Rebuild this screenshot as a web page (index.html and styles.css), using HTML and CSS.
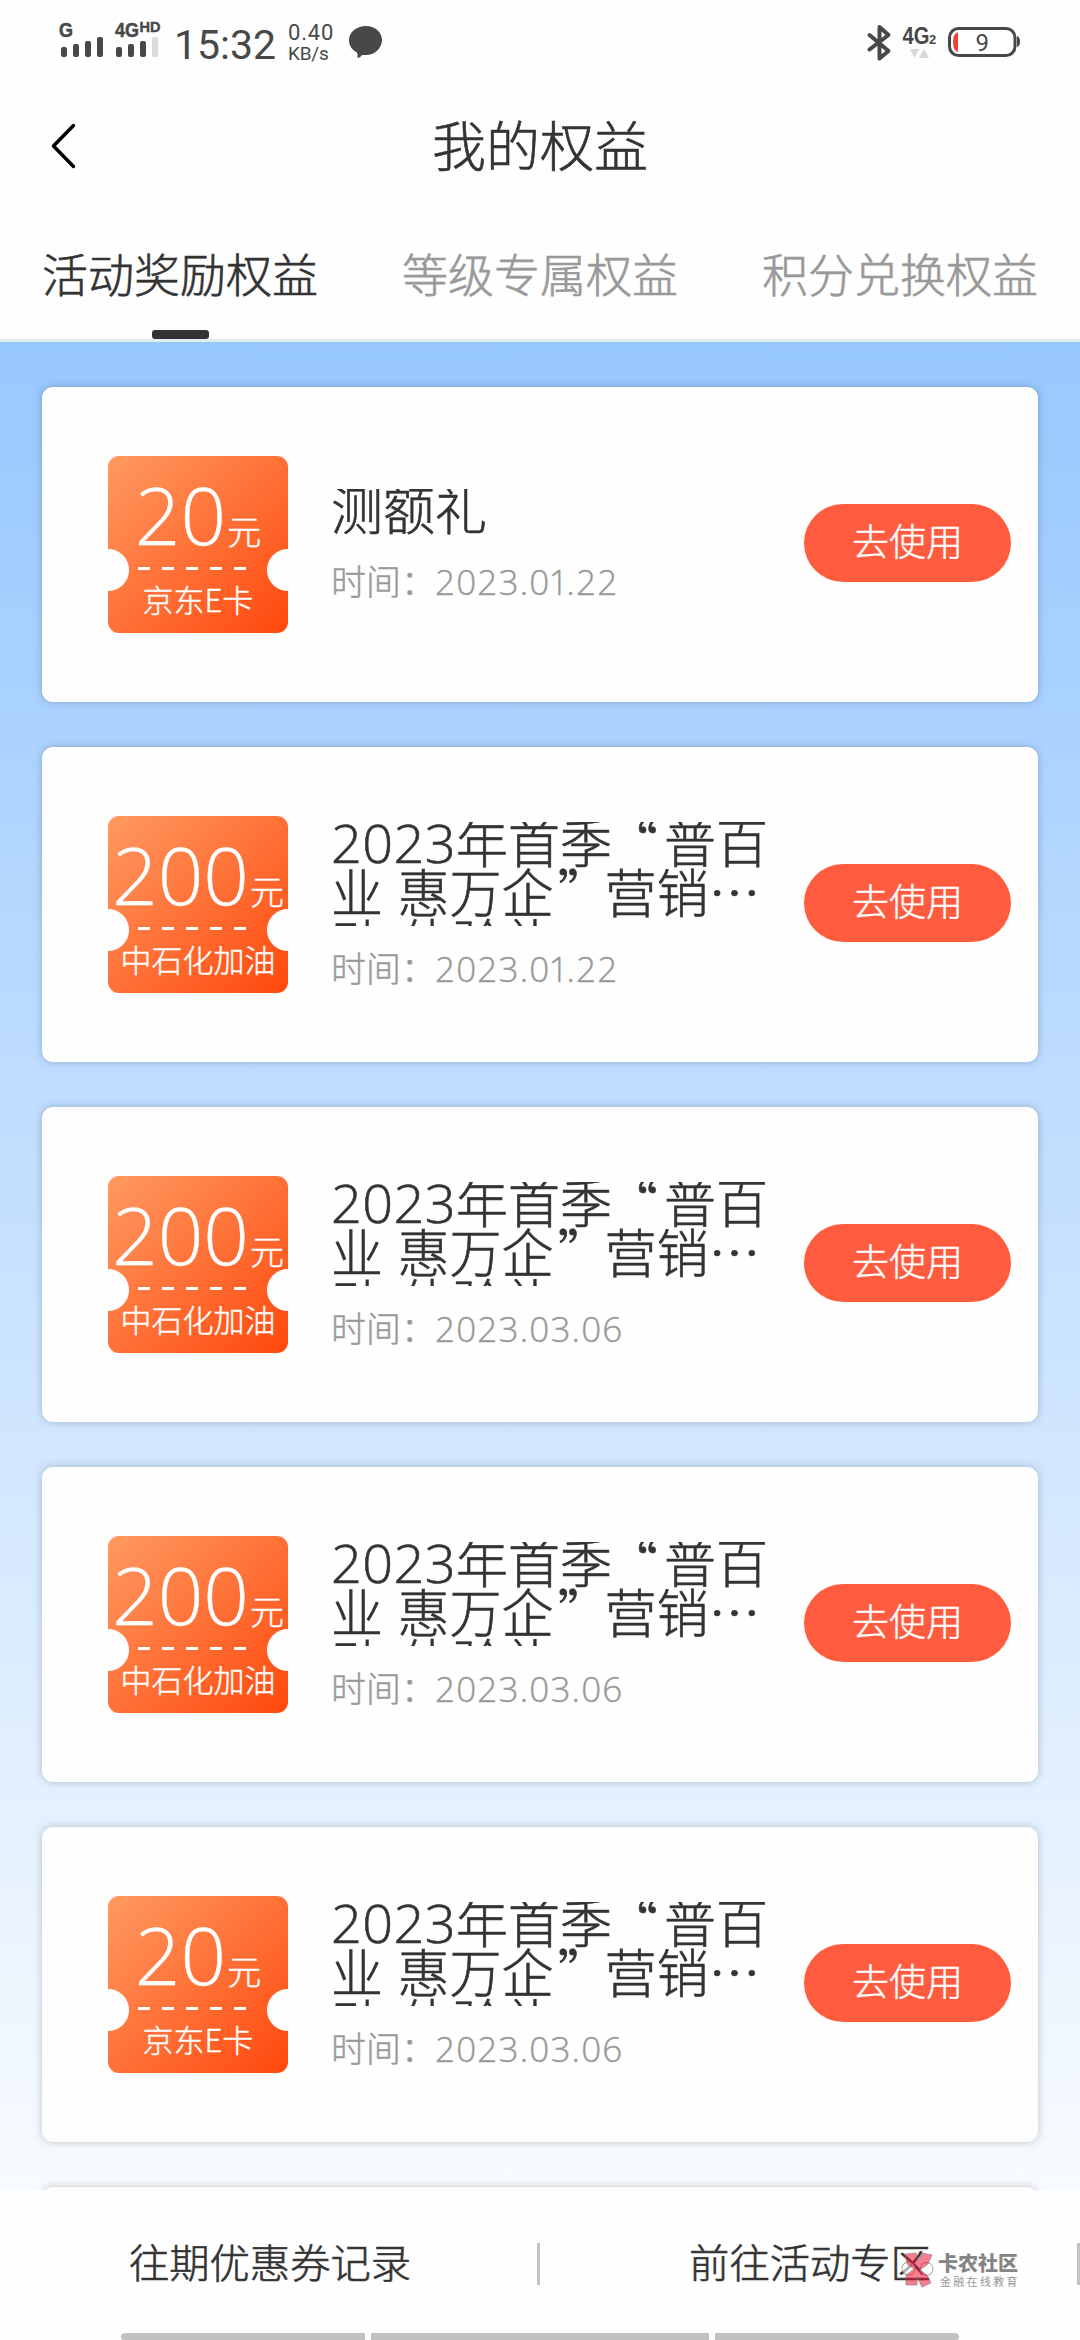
FILE: index.html
```html
<!DOCTYPE html>
<html lang="zh-CN">
<head>
<meta charset="utf-8">
<title>我的权益</title>
<link rel="stylesheet" href="styles.css">
</head>
<body>
<div class="screen">
  <header class="status">
    <svg class="signals" width="104" height="44" viewBox="58 18 104 44">
      <text class="net" x="59" y="37" textLength="14" lengthAdjust="spacingAndGlyphs">G</text>
      <g fill="#484848"><rect x="61" y="47" width="6" height="10" rx="2"/><rect x="73" y="44" width="6" height="13" rx="2"/><rect x="85" y="41" width="6" height="16" rx="2"/><rect x="97" y="37" width="6" height="20" rx="2"/>
      <rect x="116" y="47" width="6" height="10" rx="2"/><rect x="128" y="44" width="6" height="13" rx="2"/><rect x="140" y="41" width="6" height="16" rx="2"/></g>
      <rect x="152" y="37" width="6" height="20" rx="2" fill="#dcdcdc"/>
      <text class="net" x="115" y="37" textLength="24" lengthAdjust="spacingAndGlyphs">4G</text>
      <text class="hd" x="139.500" y="32" textLength="21" lengthAdjust="spacingAndGlyphs">HD</text>
    </svg>
    <span class="clock">15:32</span>
    <span class="speed"><span>0.40</span><span class="unit">KB/s</span></span>
    <svg class="bubble" width="34" height="34" viewBox="0 0 34 34"><path fill="#484848" d="M17 0C26.500 0 33 6.500 33 14S26.500 29 17 29C15 29 14 29 13 29C12 31 9.500 32 8.500 32C8.500 30 8.700 28.500 8 26.500C3 24 0 19.500 0 14C0 6.500 7 0 17 0Z"/></svg>
    <svg class="right-icons" width="154" height="44" viewBox="866 20 154 44">
      <path d="M869.500 35L888.500 51L879.500 58.500V27L888.500 35L869.500 49.500" fill="none" stroke="#484848" stroke-width="4" stroke-linejoin="round" stroke-linecap="round"/>
      <text class="net4" x="902.500" y="43.500" textLength="27" lengthAdjust="spacingAndGlyphs">4G</text>
      <text class="two" x="929" y="43.500">2</text>
      <path d="M910 49H919L914.500 58ZM919 58H929L924 49Z" fill="#d8d8d8"/>
      <rect x="949.500" y="28.500" width="65.500" height="27" rx="9" fill="#fff" stroke="#484848" stroke-width="3"/>
      <path d="M958 32V52Q953 50 953 42T958 32Z" fill="#f0402f"/>
      <path d="M1017 36Q1020 37 1020 41.500T1017 47Z" fill="#484848"/>
      <text class="pct" x="975.500" y="50.500">9</text>
    </svg>
  </header>

  <nav class="navbar">
    <svg class="back" width="26" height="48" viewBox="0 0 26 48"><path d="M23.500 3.500L3.500 24L23.500 44.500" fill="none" stroke="#000" stroke-width="3.500" stroke-linecap="round" stroke-linejoin="round"/></svg>
    <h1>我的权益</h1>
  </nav>

  <div class="tabs">
    <div class="tab active">活动奖励权益</div>
    <div class="tab">等级专属权益</div>
    <div class="tab">积分兑换权益</div>
  </div>

  <main class="list">
    <article class="card">
      <div class="coupon"><div class="amount">20<small>元</small></div><i class="dashes"></i><div class="kind">京东E卡</div></div>
      <div class="info"><div class="name"><p>测额礼</p></div><div class="time">时间：<b>2023.0<span class="one">1</span>.22</b></div></div>
      <button class="use">去使用</button>
    </article>
    <article class="card">
      <div class="coupon"><div class="amount">200<small>元</small></div><i class="dashes"></i><div class="kind">中石化加油</div></div>
      <div class="info"><div class="name"><p><b>2023</b>年首季<span class="quote">“</span>普百<br>业 惠万企<span class="endquote">”</span>营销…<br>动-体验礼</p></div><div class="time">时间：<b>2023.0<span class="one">1</span>.22</b></div></div>
      <button class="use">去使用</button>
    </article>
    <article class="card">
      <div class="coupon"><div class="amount">200<small>元</small></div><i class="dashes"></i><div class="kind">中石化加油</div></div>
      <div class="info"><div class="name"><p><b>2023</b>年首季<span class="quote">“</span>普百<br>业 惠万企<span class="endquote">”</span>营销…<br>动-体验礼</p></div><div class="time">时间：<b>2023.03.06</b></div></div>
      <button class="use">去使用</button>
    </article>
    <article class="card">
      <div class="coupon"><div class="amount">200<small>元</small></div><i class="dashes"></i><div class="kind">中石化加油</div></div>
      <div class="info"><div class="name"><p><b>2023</b>年首季<span class="quote">“</span>普百<br>业 惠万企<span class="endquote">”</span>营销…<br>动-体验礼</p></div><div class="time">时间：<b>2023.03.06</b></div></div>
      <button class="use">去使用</button>
    </article>
    <article class="card">
      <div class="coupon"><div class="amount">20<small>元</small></div><i class="dashes"></i><div class="kind">京东E卡</div></div>
      <div class="info"><div class="name"><p><b>2023</b>年首季<span class="quote">“</span>普百<br>业 惠万企<span class="endquote">”</span>营销…<br>动-体验礼</p></div><div class="time">时间：<b>2023.03.06</b></div></div>
      <button class="use">去使用</button>
    </article>
    <article class="card"></article>
  </main>

  <footer class="bottom">
    <a class="link">往期优惠券记录</a>
    <a class="link">前往活动专区</a>
    <div class="gesture"><i class="side left"></i><i class="mid"></i><i class="side right"></i></div>
    <div class="mark">
      <svg width="35" height="36" viewBox="0 0 35 36">
        <circle cx="8.500" cy="16.500" r="6.500" fill="#fff" fill-opacity=".6" stroke="#888" stroke-width=".8"/>
        <circle cx="26.500" cy="17" r="6.500" fill="#fff" fill-opacity=".6" stroke="#888" stroke-width=".8"/>
        <path d="M5 2L16 1L18 9L22 1L32 3L28 12L20 18L27 23L31 31L22 35L17 25L17 33L6 33L6 23L14 17L7 12Z" fill="#ee1030" fill-opacity=".54" stroke="#777" stroke-opacity=".7" stroke-width=".8"/>
      </svg>
      <div class="mark-text"><span class="brand">卡农社区</span><span class="slogan">金融在线教育</span></div>
    </div>
  </footer>
</div>
</body>
</html>
```
FILE: styles.css
```css
* { box-sizing: border-box; }
body {
  margin: 0;
  font-family: "Noto Sans CJK SC", sans-serif;
  font-weight: 300;
  color: #333;
  background: #fff;
}
.screen {
  width: 1080px;
  height: 2340px;
  display: flex;
  flex-direction: column;
  overflow: hidden;
  background: #fefefe;
}
.navbar, .tabs, .link, .name { -webkit-text-stroke: .6px currentColor; }
.coupon, .time, .use { -webkit-text-stroke: .4px currentColor; }

/* status bar */
.status {
  height: 84px;
  flex: none;
  display: flex;
  align-items: flex-start;
  padding: 0 60px 0 58px;
  color: #484848;
  font-family: Roboto, sans-serif;
  font-weight: 400;
}
.signals { margin-top: 18px; }
.net { font: 700 21px "Liberation Sans", sans-serif; fill: #484848; stroke: #484848; stroke-width: .5px; }
.hd { font: 700 14px "Liberation Sans", sans-serif; fill: #484848; stroke: #484848; stroke-width: .4px; }
.clock { margin: 21px 0 0 12px; width: 103px; font-size: 41px; line-height: 48px; white-space: nowrap; }
.speed { display: flex; flex-direction: column; margin: 22px 0 0 11px; width: 60px; font-size: 22px; line-height: 22px; letter-spacing: .8px; }
.unit { font-size: 19px; line-height: 20px; letter-spacing: -.2px; }
.bubble { margin: 26px 0 0 1px; }
.right-icons { margin: 20px 0 0 auto; }
.net4 { font: 700 23px "Liberation Sans", sans-serif; fill: #484848; }
.two { font: 700 13px "Liberation Sans", sans-serif; fill: #484848; }
.pct { font: 400 24px Roboto, sans-serif; fill: #484848; }

/* title bar */
.navbar {
  height: 124px;
  flex: none;
  display: grid;
  grid-template-columns: 78px 1fr 78px;
  align-items: center;
}
.back { margin-left: 50px; }
.navbar h1 { margin: 0; font-size: 54px; line-height: 60px; font-weight: 300; text-align: center; padding-bottom: 4px; }

/* tabs */
.tabs {
  height: 134px;
  flex: none;
  display: grid;
  grid-template-columns: repeat(3, 1fr);
  border-bottom: 3px solid #dcefeb;
}
.tab {
  display: flex;
  flex-direction: column;
  align-items: center;
  padding-top: 34px;
  font-size: 46px;
  line-height: 60px;
  color: #999;
}
.active { color: #333; }
.active::after { content: ""; width: 57px; height: 9px; margin-top: 28px; border-radius: 3px; background: #333; }

/* coupon list */
.list {
  height: 1848px;
  flex: none;
  overflow: hidden;
  padding: 45px 42px 0;
  display: flex;
  flex-direction: column;
  gap: 45px;
  background: linear-gradient(#97c8ff, #f8fbff);
}
.card {
  height: 315px;
  flex: none;
  display: flex;
  align-items: center;
  padding: 0 27px 0 66px;
  border-radius: 11px;
  background: #fefefe;
  box-shadow: 0 0 9px rgba(0, 0, 0, .22);
}
.coupon {
  width: 180px;
  height: 177px;
  flex: none;
  display: flex;
  flex-direction: column;
  align-items: center;
  border-radius: 11px;
  color: #fff;
  background:
    radial-gradient(circle at 0 114px, #fefefe 20.500px, transparent 21.500px),
    radial-gradient(circle at 180px 114px, #fefefe 20.500px, transparent 21.500px),
    linear-gradient(135deg, #ff9a61, #ff480d);
}
.amount {
  height: 111px;
  padding-top: 2px;
  font: 300 80px/111px "Open Sans", "Noto Sans CJK SC", sans-serif;
  white-space: nowrap;
}
.amount small { font-size: 34px; font-family: "Noto Sans CJK SC", sans-serif; line-height: 34px; margin-left: 1px; }
.dashes {
  width: 108px;
  height: 3px;
  margin-right: 12px;
  background: repeating-linear-gradient(90deg, #fff 0 12px, transparent 12px 24px);
}
.kind { font-size: 31px; line-height: 36px; margin-top: 11px; white-space: nowrap; }
.info { width: 473px; margin-left: 43px; flex: none; }
.name { max-height: 104px; overflow: hidden; }
.name p { margin: -6px 0 0; font-size: 52px; line-height: 50px; white-space: nowrap; word-spacing: 3px; padding-bottom: 6px; }
.name b { font-family: "Open Sans", sans-serif; font-size: 54px; font-weight: 300; line-height: 40px; letter-spacing: .4px; }
.quote { margin: 0 6px 0 -6px; }
.endquote { margin: 0 -5px 0 4px; }
.time { margin-top: 23px; font-size: 35px; line-height: 36px; height: 38px; color: #999; white-space: nowrap; }
.time b { font-family: "Open Sans", sans-serif; font-weight: 300; letter-spacing: 1.2px; margin-left: -1px; }
.one { letter-spacing: -2px; margin-left: -2px; }
.use {
  width: 207px;
  height: 78px;
  flex: none;
  border: 0;
  padding: 0 0 6px;
  margin: 0 0 3px;
  border-radius: 39px;
  background: #ff5c3f;
  color: #fff;
  font: 300 37px/72px "Noto Sans CJK SC", sans-serif;
}

/* bottom bar */
.bottom {
  position: relative;
  height: 150px;
  flex: none;
  display: grid;
  grid-template-columns: 1fr 1fr;
  grid-template-rows: 143px 7px;
}
.link {
  display: flex;
  justify-content: center;
  font-size: 40.3px;
  line-height: 42px;
  margin: 53px 0 48px;
  padding: 0 0 6px 3px;
  border-right: 3px solid #c3c3c3;
  align-items: center;
}
.gesture { grid-column: 1 / 3; display: flex; justify-content: center; gap: 6px; }
.gesture i { height: 7px; background: #c1c1c1; }
.side { width: 244px; }
.mid { width: 338px; }
.left { border-radius: 6px 0 0 4px; }
.right { border-radius: 0 6px 4px 0; }
.mark { position: absolute; left: 900px; top: 62px; display: flex; gap: 3px; }
.mark-text { display: flex; flex-direction: column; white-space: nowrap; }
.brand { font-size: 20px; line-height: 22px; font-weight: 900; color: #858585; }
.slogan { font-size: 11px; line-height: 14px; font-weight: 400; letter-spacing: 2.300px; color: #999; padding-left: 2px; }
```
